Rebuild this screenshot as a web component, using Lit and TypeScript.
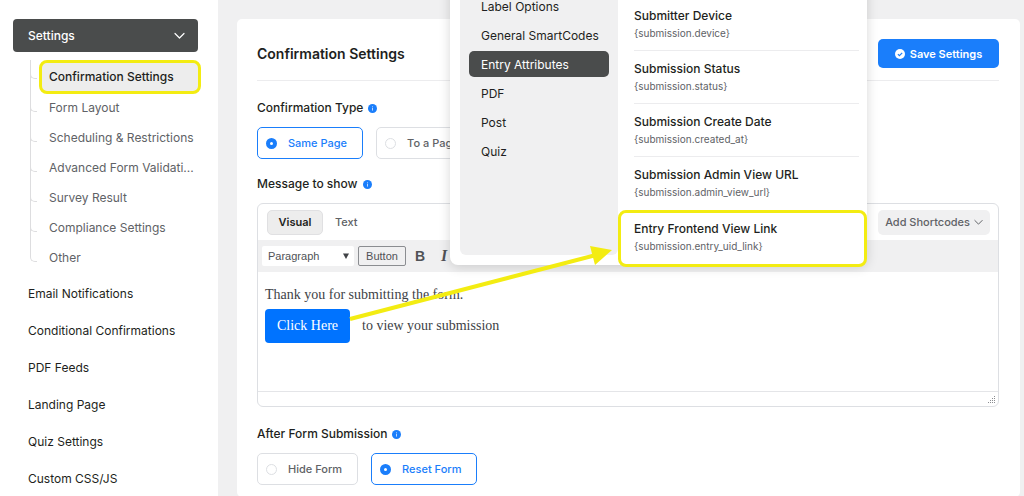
import { LitElement, html, css, svg } from "lit";
import { customElement, state } from "lit/decorators.js";
import { classMap } from "lit/directives/class-map.js";

const chevron = svg`<path d="M1 1.5 5.5 6 10 1.5" fill="none" stroke="currentColor" stroke-width="1.2" stroke-linecap="round" stroke-linejoin="round"/>`;

const infoIcon = html`<svg class="info" viewBox="0 0 10 10" aria-hidden="true">
  <circle cx="5" cy="5" r="5" fill="#1a7efb" />
  <rect x="4.5" y="4.3" width="1" height="3" fill="#cfe3ff" />
  <rect x="4.5" y="2.6" width="1" height="1" fill="#cfe3ff" />
</svg>`;

@customElement("settings-sidebar")
export class SettingsSidebar extends LitElement {
  private sub = [
    "Confirmation Settings",
    "Form Layout",
    "Scheduling & Restrictions",
    "Advanced Form Validati...",
    "Survey Result",
    "Compliance Settings",
    "Other",
  ];
  private items = [
    "Email Notifications",
    "Conditional Confirmations",
    "PDF Feeds",
    "Landing Page",
    "Quiz Settings",
    "Custom CSS/JS",
  ];

  static styles = css`
    :host {
      display: block;
      background: #fff;
      padding: 19px 20px 0 13px;
      box-sizing: border-box;
      font-size: 12px;
    }
    .group {
      display: flex;
      align-items: center;
      justify-content: space-between;
      width: 100%;
      height: 33px;
      padding: 0 13px 0 15px;
      border: 0;
      border-radius: 4px;
      background: #4a4c4c;
      color: #fff;
      font: 500 12px Inter, sans-serif;
    }
    .group svg {
      width: 11px;
      height: 8px;
    }
    ul {
      list-style: none;
      margin: 0;
      padding: 0;
    }
    .sub {
      margin: 8px 0 2px 17px;
    }
    .sub li {
      position: relative;
      display: flex;
      align-items: center;
      height: 30px;
      padding-left: 9px;
    }
    .sub li::before {
      content: "";
      position: absolute;
      left: 0;
      top: 0;
      width: 6px;
      height: 18px;
      border-left: 1px solid #dddddf;
      border-bottom: 1px solid #dddddf;
      border-bottom-left-radius: 5px;
    }
    .sub li:not(:last-child)::after {
      content: "";
      position: absolute;
      left: 0;
      top: 0;
      bottom: 0;
      border-left: 1px solid #dddddf;
    }
    .sub li.active {
      height: 34px;
      margin-bottom: -1px;
    }
    .sub a {
      flex: 1;
      min-width: 0;
      padding: 0 0 0 10px;
      white-space: nowrap;
      color: #606266;
      text-decoration: none;
      line-height: 20px;
    }
    .sub .active a {
      box-sizing: border-box;
      height: 34px;
      margin-right: -3px;
      padding: 4px 7px;
      border: 3px solid #f3ec12;
      border-radius: 8px;
      background: #ededed;
      color: #1e1f21;
      font-weight: 500;
    }
    .main a {
      display: block;
      padding-left: 15px;
      line-height: 37px;
      color: #1e1f21;
      text-decoration: none;
    }
  `;

  render() {
    return html`
      <nav aria-label="Form settings">
        <button class="group" aria-expanded="true">
          Settings <svg viewBox="0 0 11 8" aria-hidden="true">${chevron}</svg>
        </button>
        <ul class="sub">
          ${this.sub.map(
            (t, i) => html`<li class=${classMap({ active: i === 0 })}><a href="#">${t}</a></li>`
          )}
        </ul>
        <ul class="main">
          ${this.items.map((t) => html`<li><a href="#">${t}</a></li>`)}
        </ul>
      </nav>
    `;
  }
}

@customElement("shortcode-menu")
export class ShortcodeMenu extends LitElement {
  private groups = ["Label Options", "General SmartCodes", "Entry Attributes", "PDF", "Post", "Quiz"];
  private codes = [
    ["Submitter Device", "{submission.device}"],
    ["Submission Status", "{submission.status}"],
    ["Submission Create Date", "{submission.created_at}"],
    ["Submission Admin View URL", "{submission.admin_view_url}"],
    ["Entry Frontend View Link", "{submission.entry_uid_link}"],
  ];

  static styles = css`
    :host {
      display: flex;
      box-sizing: border-box;
      padding: 0 0 0 10px;
      background: #fff;
      border-radius: 0 0 8px 8px;
      box-shadow: 0 2px 12px rgba(0, 0, 0, 0.16);
      font-size: 12px;
    }
    .groups {
      display: flex;
      flex-direction: column;
      gap: 3px;
      flex: 0 0 158px;
      min-width: 0;
      box-sizing: border-box;
      padding: 13px 9px 0;
      margin-bottom: 10px;
      background: #f0f0f1;
      border-radius: 0 0 6px 6px;
    }
    button {
      border: 0;
      margin: 0;
      background: none;
      text-align: left;
      font-family: inherit;
      color: #1e1f21;
    }
    .groups button {
      height: 26px;
      padding: 0 0 0 12px;
      border-radius: 5px;
      font-size: 12px;
      white-space: nowrap;
    }
    .groups button.on {
      background: #4a4c4c;
      color: #fff;
    }
    .codes {
      flex: 1;
      padding-top: 18px;
    }
    .codes button {
      display: flex;
      flex-direction: column;
      justify-content: center;
      align-items: flex-start;
      gap: 1px;
      height: 53px;
      width: calc(100% - 24px);
      margin: 0 7px 0 16px;
      padding: 0;
      border-bottom: 1px solid #ececee;
    }
    .codes button:nth-last-child(2) {
      border-bottom-color: transparent;
    }
    .codes button.marked {
      width: 100%;
      height: 57px;
      margin: 0 0 -3px;
      padding: 0 0 3px 13px;
      border: 3px solid #f3ec12;
      border-radius: 8px;
    }
    .name {
      font-size: 12px;
      font-weight: 500;
      line-height: 17px;
    }
    .code {
      font-size: 10px;
      line-height: 16px;
      color: #606266;
    }
  `;

  render() {
    return html`
      <div class="groups">
        ${this.groups.map((g) => html`<button class=${classMap({ on: g === "Entry Attributes" })}>${g}</button>`)}
      </div>
      <div class="codes">
        ${this.codes.map(
          ([name, code], i) => html`<button class=${classMap({ marked: i === 4 })}>
            <span class="name">${name}</span><span class="code">${code}</span>
          </button>`
        )}
      </div>
    `;
  }
}

@customElement("app-root")
export class AppRoot extends LitElement {
  @state() private type = "Same Page";
  @state() private after = "Reset Form";

  static styles = css`
    :host {
      display: block;
      font-family: Inter, sans-serif;
      font-size: 12px;
      color: #1e1f21;
    }
    .layout {
      position: relative;
      display: grid;
      grid-template-columns: 218px minmax(0, 1fr);
      height: 100vh;
      overflow: hidden;
      background: #f0f0f1;
    }
    main {
      padding: 19px 4px 0 19px;
      display: flex;
    }
    .card {
      flex: 1;
      min-width: 0;
      box-sizing: border-box;
      padding: 0 21px 0 20px;
      background: #fff;
      border-radius: 5px;
    }
    header {
      display: flex;
      align-items: center;
      justify-content: space-between;
      height: 62px;
      padding-top: 8px;
      box-sizing: border-box;
      border-bottom: 1px solid #ececee;
    }
    h1 {
      margin: 0;
      font-size: 14px;
      font-weight: 600;
    }
    .save {
      display: flex;
      align-items: center;
      justify-content: center;
      gap: 5px;
      width: 121px;
      height: 29px;
      border: 0;
      border-radius: 5px;
      background: #1a7efb;
      color: #fff;
      font: 600 11px Inter, sans-serif;
    }
    .save svg {
      width: 10px;
      height: 10px;
    }
    fieldset {
      border: 0;
      margin: 17px 0 0;
      padding: 0;
      min-width: 0;
    }
    .title {
      display: flex;
      align-items: center;
      gap: 5px;
      margin: 0;
      padding: 0 0 9px;
      font-size: 12px;
      font-weight: 500;
      line-height: 20px;
    }
    .title.message {
      margin-top: 15px;
    }
    .info {
      width: 9px;
      height: 9px;
    }
    .radios {
      display: flex;
      gap: 13px;
    }
    .radio {
      display: flex;
      align-items: center;
      gap: 11px;
      height: 32px;
      box-sizing: border-box;
      padding: 0 15px 0 8px;
      border: 1px solid #dddfe3;
      border-radius: 5px;
      font-size: 11px;
      font-weight: 500;
      color: #606266;
      white-space: nowrap;
    }
    .radio.on {
      border-color: #1a7efb;
      color: #1a7efb;
    }
    .radio input {
      appearance: none;
      width: 11px;
      height: 11px;
      margin: 0;
      box-sizing: border-box;
      border: 1px solid #dddfe3;
      border-radius: 50%;
      background: #fff;
    }
    .radio input:checked {
      border: 4px solid #1a7efb;
    }
    .editor {
      border: 1px solid #dddfe3;
      border-radius: 6px;
    }
    .tabs {
      display: flex;
      align-items: center;
      height: 36px;
      padding: 0 8px 0 9px;
    }
    .tabs button {
      height: 25px;
      border: 1px solid transparent;
      border-radius: 5px;
      background: none;
      color: #606266;
      font: 500 11px Inter, sans-serif;
      padding: 0 11px;
    }
    .tabs .on {
      width: 56px;
      padding: 0;
      background: #ededed;
      border-color: #e0e0e2;
      color: #1e1f21;
      font-weight: 600;
    }
    .tabs .add {
      display: flex;
      align-items: center;
      gap: 4px;
      margin-left: auto;
      padding: 0 6px;
      background: #f0f0f1;
    }
    .add svg {
      width: 9px;
      height: 7px;
    }
    .toolbar {
      display: flex;
      align-items: center;
      gap: 4px;
      height: 32px;
      padding: 0 4px;
      background: #f0f0f1;
      color: #505256;
    }
    .pick {
      position: relative;
      display: flex;
      align-items: center;
    }
    .pick select {
      appearance: none;
      width: 92px;
      height: 20px;
      padding: 0 6px;
      border: 0;
      border-radius: 2px;
      background: #fff;
      color: #505256;
      font: 11px "Liberation Sans", sans-serif;
    }
    .pick svg {
      position: absolute;
      right: 5px;
      width: 6px;
      height: 6px;
    }
    .toolbar button {
      width: 20px;
      height: 20px;
      padding: 0;
      border: 0;
      background: none;
      color: #505256;
    }
    .toolbar .insert {
      width: 48px;
      border: 1px solid #8b8d91;
      border-radius: 2px;
      font: 11px "Liberation Sans", sans-serif;
    }
    .toolbar .bold {
      font: 700 14px "Liberation Sans", sans-serif;
    }
    .toolbar .italic {
      font: italic 700 16px "Liberation Serif", serif;
    }
    .content {
      height: 119px;
      box-sizing: border-box;
      padding: 13px 7px 0;
      font: 14px/20px "Liberation Serif", serif;
      color: #404246;
      outline: none;
    }
    .content p {
      margin: 0 0 4px;
    }
    .cta {
      display: inline-block;
      width: 85px;
      margin-right: 12px;
      border-radius: 4px;
      background: #0073ff;
      color: #fff;
      line-height: 34px;
      text-align: center;
      text-decoration: none;
    }
    .status {
      display: flex;
      justify-content: flex-end;
      align-items: flex-end;
      height: 15px;
      box-sizing: border-box;
      padding: 0 2px 2px;
      border-top: 1px solid #e4e5e8;
    }
    .status svg {
      width: 9px;
      height: 9px;
    }
    .menu {
      position: absolute;
      top: -29px;
      right: 157px;
      width: 417px;
      height: 294px;
      padding-top: 9px;
    }
    .arrow {
      position: absolute;
      top: 240px;
      right: 404px;
      width: 280px;
      height: 90px;
      pointer-events: none;
    }
  `;

  private radio(name: string, value: string, current: string, pick: (v: string) => void) {
    return html`<label class=${classMap({ radio: true, on: value === current })}>
      <input type="radio" name=${name} .checked=${value === current} @change=${() => pick(value)} />${value}
    </label>`;
  }

  render() {
    return html`
      <div class="layout">
        <settings-sidebar></settings-sidebar>
        <main>
          <section class="card">
            <header>
              <h1>Confirmation Settings</h1>
              <button class="save">
                <svg viewBox="0 0 10 10" aria-hidden="true">
                  <circle cx="5" cy="5" r="5" fill="#fff" />
                  <path d="M2.9 5.1 4.4 6.6 7.2 3.8" fill="none" stroke="#1a7efb" stroke-width="1.2" />
                </svg>
                Save Settings
              </button>
            </header>
            <fieldset>
              <legend class="title">Confirmation Type ${infoIcon}</legend>
              <div class="radios">
                ${["Same Page", "To a Page"].map((v) => this.radio("type", v, this.type, (x) => (this.type = x)))}
              </div>
            </fieldset>
            <div class="title message" id="message">Message to show ${infoIcon}</div>
            <div class="editor">
              <div class="tabs">
                <button class="on">Visual</button>
                <button>Text</button>
                <button class="add">
                  Add Shortcodes <svg viewBox="0 0 11 8" aria-hidden="true">${chevron}</svg>
                </button>
              </div>
              <div class="toolbar">
                <span class="pick">
                  <select aria-label="Text style">
                    <option>Paragraph</option>
                  </select>
                  <svg viewBox="0 0 6 6" aria-hidden="true"><path d="M0 0.5H6L3 6Z" fill="#404246" /></svg>
                </span>
                <button class="insert">Button</button>
                <button class="bold" aria-label="Bold">B</button>
                <button class="italic" aria-label="Italic">I</button>
              </div>
              <div class="content" contenteditable="true" role="textbox" aria-labelledby="message" spellcheck="false">
                <p>Thank you for submitting the form.</p>
                <p><a class="cta" href="#">Click Here</a>to view your submission</p>
              </div>
              <div class="status">
                <svg viewBox="0 0 9 9" aria-hidden="true">
                  <path
                    d="M7 1h1v1H7zM5 3h1v1H5zM7 3h1v1H7zM3 5h1v1H3zM5 5h1v1H5zM7 5h1v1H7zM1 7h1v1H1zM3 7h1v1H3zM5 7h1v1H5zM7 7h1v1H7z"
                    fill="#8b8d91"
                  />
                </svg>
              </div>
            </div>
            <fieldset>
              <legend class="title">After Form Submission ${infoIcon}</legend>
              <div class="radios">
                ${["Hide Form", "Reset Form"].map((v) => this.radio("after", v, this.after, (x) => (this.after = x)))}
              </div>
            </fieldset>
          </section>
        </main>
        <shortcode-menu class="menu"></shortcode-menu>
        <svg class="arrow" viewBox="0 0 280 90" aria-hidden="true">
          <path d="M10 79 256 15" stroke="#f3ec12" stroke-width="4" />
          <path d="M250 6 272 10 255 25Z" fill="#f3ec12" />
        </svg>
      </div>
    `;
  }
}
